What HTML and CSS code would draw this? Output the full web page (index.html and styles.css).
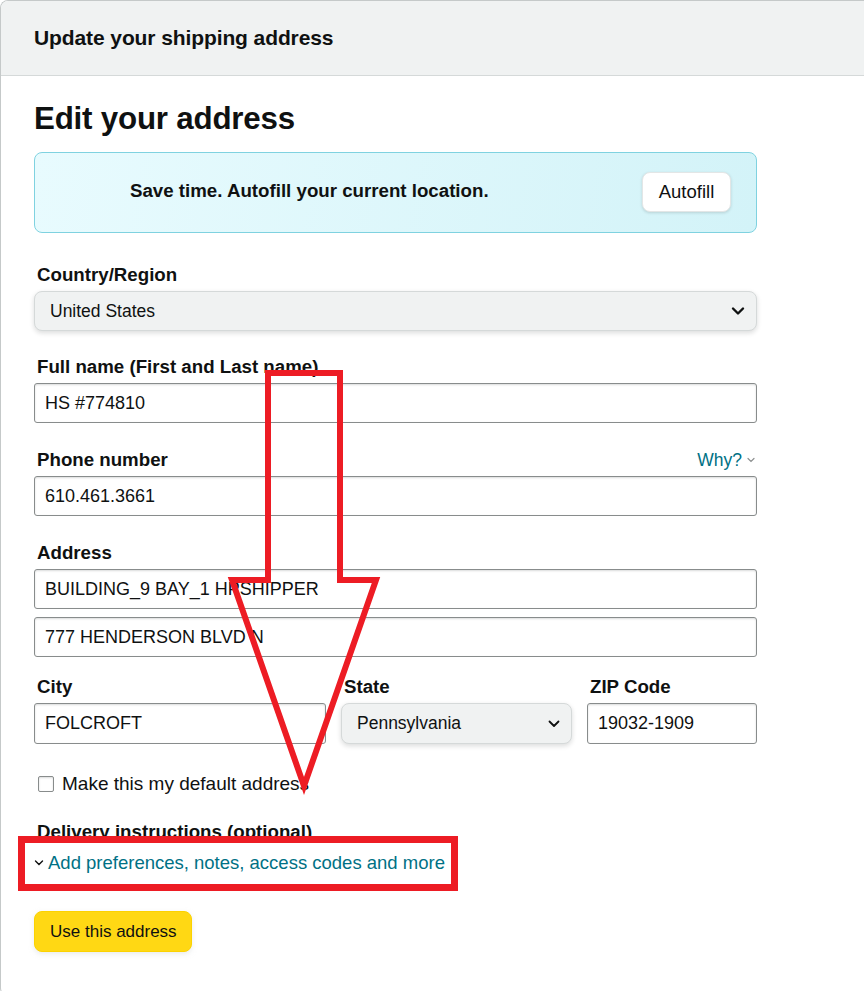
FILE: index.html
```html
<!DOCTYPE html>
<html lang="en">
<head>
<meta charset="utf-8">
<title>Update your shipping address</title>
<link rel="stylesheet" href="styles.css">
</head>
<body>
<div class="modal">
  <header class="modal-header">
    <h2 class="modal-title">Update your shipping address</h2>
  </header>
  <main class="modal-body">
    <h1 class="page-title">Edit your address</h1>

    <div class="banner">
      <span class="banner-text">Save time. Autofill your current location.</span>
      <button class="btn-autofill">Autofill</button>
    </div>

    <div class="field field-country">
      <label class="label">Country/Region</label>
      <div class="select">
        <span>United States</span>
        <svg class="chev-dark" width="14" height="10" viewBox="0 0 14 10"><path d="M2 2.5 L7 7.5 L12 2.5" fill="none" stroke="#0f1111" stroke-width="2.4" stroke-linecap="round" stroke-linejoin="round"/></svg>
      </div>
    </div>

    <div class="field field-name">
      <label class="label">Full name (First and Last name)</label>
      <div class="input">HS #774810</div>
    </div>

    <div class="field field-phone">
      <div class="label-row">
        <label class="label">Phone number</label>
        <span class="why">Why?<svg width="10" height="8" viewBox="0 0 10 8"><path d="M2 2.5 L5 5.5 L8 2.5" fill="none" stroke="#8d9090" stroke-width="1.2" stroke-linecap="round"/></svg></span>
      </div>
      <div class="input">610.461.3661</div>
    </div>

    <div class="field field-address">
      <label class="label">Address</label>
      <div class="input">BUILDING_9 BAY_1 HPSHIPPER</div>
      <div class="input second">777 HENDERSON BLVD N</div>
    </div>

    <div class="row3">
      <div class="col">
        <label class="label">City</label>
        <div class="input">FOLCROFT</div>
      </div>
      <div class="col">
        <label class="label">State</label>
        <div class="select small">
          <span>Pennsylvania</span>
          <svg class="chev-dark" width="14" height="10" viewBox="0 0 14 10"><path d="M2.5 2.5 L7 7 L11.5 2.5" fill="none" stroke="#0f1111" stroke-width="1.8" stroke-linecap="round" stroke-linejoin="round"/></svg>
        </div>
      </div>
      <div class="col">
        <label class="label">ZIP Code</label>
        <div class="input">19032-1909</div>
      </div>
    </div>

    <div class="check-row">
      <span class="checkbox"></span>
      <span>Make this my default address</span>
    </div>

    <div class="delivery">
      <div class="label">Delivery instructions (optional)</div>
      <a class="link">
        <svg width="10" height="8" viewBox="0 0 10 8"><path d="M1.5 2 L5 5.5 L8.5 2" fill="none" stroke="#0f1111" stroke-width="1.4" stroke-linecap="round"/></svg>
        Add preferences, notes, access codes and more
      </a>
    </div>

    <button class="btn-primary">Use this address</button>
  </main>
</div>

<svg class="annotation" width="864" height="991" viewBox="0 0 864 991">
  <polygon points="268,373 340,373 340,580 376,580 304,786 232,580 268,580" fill="none" stroke="#ed1c24" stroke-width="6" stroke-linejoin="miter"/>
  <rect x="21.5" y="839.5" width="433" height="48" fill="none" stroke="#ed1c24" stroke-width="7"/>
</svg>
</body>
</html>
```

FILE: styles.css
```css
* { box-sizing: border-box; }

html, body {
  margin: 0;
  padding: 0;
  background: #ffffff;
  overflow: hidden;
}

body {
  font-family: "Liberation Sans", Arial, sans-serif;
  color: #0f1111;
  font-size: 18.5px;
  width: 864px;
  height: 991px;
  position: relative;
}

.modal {
  width: 864px;
  height: 996px;
  border: 1px solid #c5c9c9;
  border-right: none;
  border-radius: 8px 0 0 8px;
  overflow: hidden;
  background: #fff;
}

.modal-header {
  height: 75px;
  background: #f0f2f2;
  border-bottom: 1px solid #d5d9d9;
  display: flex;
  align-items: center;
  padding-left: 33px;
}

.modal-title {
  margin: 0;
  font-size: 21px;
  font-weight: bold;
  letter-spacing: -0.1px;
}

.modal-body {
  padding: 23px 0 0 33px;
  width: 756px;
}

.page-title {
  margin: 0;
  font-size: 31.3px;
  line-height: 40px;
  font-weight: bold;
  letter-spacing: -0.2px;
}

.banner {
  margin-top: 13px;
  height: 81px;
  border: 1px solid #7fd2e0;
  border-radius: 8px;
  background: linear-gradient(100deg, #e8fbfe 0%, #d3f3f8 100%);
  display: flex;
  align-items: center;
  padding-left: 95px;
  padding-right: 25px;
}

.banner-text {
  flex: 1;
  font-weight: bold;
  font-size: 18.7px;
  margin-top: -4px;
}

.btn-autofill {
  font-family: inherit;
  font-size: 18.5px;
  color: #0f1111;
  background: #fff;
  border: 1px solid #e3e6e6;
  border-radius: 8px;
  height: 40px;
  width: 89px;
  box-shadow: 0 1px 3px rgba(15, 17, 17, 0.15);
  padding: 0;
  margin-top: -2px;
}

.field-country { margin-top: 31px; }
.field-name { margin-top: 25px; }
.field-phone { margin-top: 26px; }
.field-address { margin-top: 26px; }

.label {
  display: block;
  font-weight: bold;
  font-size: 18.7px;
  line-height: 22px;
  padding-left: 3px;
  margin-bottom: 5px;
}

.label-row {
  display: flex;
  justify-content: space-between;
  align-items: flex-start;
}

.why {
  color: #007185;
  font-size: 17.5px;
  line-height: 22px;
  display: flex;
  align-items: center;
  gap: 4px;
  margin-right: 1px;
}

.select {
  height: 40px;
  font-size: 17.5px;
  background: #f0f2f2;
  border: 1px solid #d5d9d9;
  border-radius: 8px;
  box-shadow: 0 2px 5px rgba(15, 17, 17, 0.15);
  display: flex;
  align-items: center;
  justify-content: space-between;
  padding: 0 11px 0 15px;
}
.select.small { height: 41px; padding-right: 10px; }

.input {
  height: 40px;
  font-size: 18px;
  border: 1px solid #888c8c;
  border-radius: 3px;
  box-shadow: 0 1px 2px rgba(15, 17, 17, 0.15) inset;
  display: flex;
  align-items: center;
  padding-left: 10px;
  background: #fff;
}
.input.second { margin-top: 8px; }

.row3 {
  margin-top: 19px;
  display: grid;
  grid-template-columns: 292px 1fr 170px;
  column-gap: 15px;
}
.row3 .input { height: 41px; }

.check-row {
  margin-top: 29px;
  display: flex;
  align-items: center;
  gap: 8px;
  padding-left: 4px;
  height: 22px;
  font-size: 19px;
}
.checkbox {
  width: 16px;
  height: 16px;
  border: 1px solid #888c8c;
  border-radius: 2px;
  box-shadow: 0 1px 2px rgba(15,17,17,.15) inset;
  display: inline-block;
}

.delivery {
  margin-top: 26px;
}
.delivery .label { margin-bottom: 9px; }

.link {
  color: #007185;
  display: flex;
  align-items: center;
  gap: 4px;
  line-height: 22px;
}

.btn-primary {
  margin-top: 37px;
  font-family: inherit;
  font-size: 17px;
  color: #0f1111;
  background: #ffd814;
  border: 1px solid #fcd200;
  border-radius: 8px;
  height: 41px;
  padding: 0 14px 0 15px;
  box-shadow: 0 2px 5px rgba(213, 217, 217, 0.5);
}

.annotation {
  position: absolute;
  left: 0;
  top: 0;
  pointer-events: none;
}
```
